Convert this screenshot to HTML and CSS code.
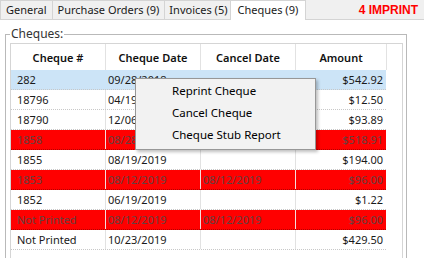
FILE: index.html
```html
<!DOCTYPE html>
<html lang="en">
<head>
    <meta charset="UTF-8">
    <title>Vendor - Cheques</title>
    <link rel="stylesheet" href="styles.css">
</head>
<body>
    <div class="window">
        <div class="tabbar">
            <div class="tab">General</div>
            <div class="tab">Purchase Orders (9)</div>
            <div class="tab tight">Invoices (5)</div>
            <div class="tab active">Cheques (9)</div>
            <div class="imprint">4 IMPRINT</div>
        </div>

        <div class="panel">
            <fieldset class="groupbox">
                <legend>Cheques:</legend>

                <div class="grid">
                    <div class="grid-head">
                        <div class="hcell">Cheque #</div>
                        <div class="hcell">Cheque Date</div>
                        <div class="hcell">Cancel Date</div>
                        <div class="hcell">Amount</div>
                        <div class="hcell blank"></div>
                    </div>

                    <div class="row selected">
                        <div class="cell num">282</div>
                        <div class="cell">09/28/2018</div>
                        <div class="cell"></div>
                        <div class="cell amt">$542.92</div>
                    </div>
                    <div class="row">
                        <div class="cell num">18796</div>
                        <div class="cell">04/19/2019</div>
                        <div class="cell"></div>
                        <div class="cell amt">$12.50</div>
                    </div>
                    <div class="row">
                        <div class="cell num">18790</div>
                        <div class="cell">12/06/2018</div>
                        <div class="cell"></div>
                        <div class="cell amt">$93.89</div>
                    </div>
                    <div class="row cancelled">
                        <div class="cell num">1858</div>
                        <div class="cell">08/28/2019</div>
                        <div class="cell">08/28/2019</div>
                        <div class="cell amt">$518.91</div>
                    </div>
                    <div class="row">
                        <div class="cell num">1855</div>
                        <div class="cell">08/19/2019</div>
                        <div class="cell"></div>
                        <div class="cell amt">$194.00</div>
                    </div>
                    <div class="row cancelled">
                        <div class="cell num">1853</div>
                        <div class="cell">08/12/2019</div>
                        <div class="cell">08/12/2019</div>
                        <div class="cell amt">$96.00</div>
                    </div>
                    <div class="row">
                        <div class="cell num">1852</div>
                        <div class="cell">06/19/2019</div>
                        <div class="cell"></div>
                        <div class="cell amt">$1.22</div>
                    </div>
                    <div class="row cancelled">
                        <div class="cell num">Not Printed</div>
                        <div class="cell">08/12/2019</div>
                        <div class="cell">08/12/2019</div>
                        <div class="cell amt">$96.00</div>
                    </div>
                    <div class="row">
                        <div class="cell num">Not Printed</div>
                        <div class="cell">10/23/2019</div>
                        <div class="cell"></div>
                        <div class="cell amt">$429.50</div>
                    </div>
                </div>
            </fieldset>

            <!-- right-click menu over the grid -->
            <ul class="context-menu">
                <li>Reprint Cheque</li>
                <li>Cancel Cheque</li>
                <li>Cheque Stub Report</li>
            </ul>
        </div>
    </div>
</body>
</html>
```

FILE: styles.css
```css
:root {
    --window-bg: #f0f0f0;
    --tab-border: #d4d4d4;
    --group-border: #b9b9b9;
    --grid-border: #d5d5d5;
    --col-line: #e2e2e2;
    --select-bg: #cce4f7;
    --cancel-bg: #ff0000;
    --text: #1a1a1a;
}

* {
    margin: 0;
    padding: 0;
    box-sizing: border-box;
}

body {
    background-color: var(--window-bg);
    color: var(--text);
    font-family: "Noto Sans", "Open Sans", sans-serif;
    font-size: 11px;
    overflow: hidden;
}

.window {
    width: 424px;
    height: 258px;
    display: flex;
    flex-direction: column;
    overflow: hidden;
}

/* tabs */
.tabbar {
    display: flex;
    align-items: flex-end;
    height: 20px;
    border-bottom: 1px solid var(--tab-border);
}

.tab {
    height: 19px;
    line-height: 17px;
    padding: 0 5px;
    border: 1px solid var(--tab-border);
    border-bottom: none;
    margin-right: -1px;
    background-color: var(--window-bg);
    white-space: nowrap;
}

.tab.tight {
    padding: 0 3px 0 4px;
}

.tab.active {
    height: 20px;
    margin-bottom: -1px;
    padding: 0 7px 0 6px;
    background-color: #ffffff;
    position: relative;
}

.imprint {
    margin-left: auto;
    align-self: center;
    padding-right: 6px;
    color: #ff0000;
    font-family: "Liberation Sans", Arial, sans-serif;
    font-weight: bold;
    font-size: 12px;
}

/* panel */
.panel {
    flex: 1;
    min-height: 0;
    background-color: #ffffff;
    position: relative;
    overflow: hidden;
}

.groupbox {
    margin: 6px 17px 0 5px;
    padding: 1px 3px 0 4px;
    border: 1px solid var(--group-border);
    border-bottom: none;
    height: 232px;
}

.groupbox legend {
    margin-left: 0;
    padding: 0 1px;
    line-height: 16px;
    font-size: 12px;
    color: #333333;
}

/* grid */
.grid {
    border: 1px solid var(--grid-border);
    border-bottom: none;
    height: 222px;
    display: flex;
    flex-direction: column;
}

.grid-head {
    display: grid;
    grid-template-columns: 95px 95px 95px 91px 1fr;
    height: 26px;
}

.hcell {
    display: flex;
    align-items: center;
    justify-content: center;
    border-right: 1px solid var(--col-line);
    font-weight: 600;
    color: #111111;
}

.hcell.blank {
    border-right: none;
}

.row {
    display: grid;
    grid-template-columns: 95px 95px 95px 90px;
    width: 375px;
    height: 20px;
    border-bottom: 1px dotted #c8c8c8;
}

.cell {
    display: flex;
    align-items: center;
    padding: 0 2px;
    border-right: 1px solid var(--col-line);
    white-space: nowrap;
    overflow: hidden;
}

.cell.num {
    padding-left: 6px;
}

.cell.amt {
    justify-content: flex-end;
    padding-right: 3px;
    border-right: none;
}

.row.selected {
    background-color: var(--select-bg);
}

.row.selected .cell {
    border-right-color: transparent;
}

.row.cancelled {
    background-color: var(--cancel-bg);
    color: #644040;
    border-bottom-color: #b00000;
}

.row.cancelled .cell {
    border-right-color: #f4dcdc;
}

/* context menu */
.context-menu {
    list-style: none;
    position: absolute;
    left: 135px;
    top: 58px;
    width: 181px;
    padding: 1px 0 3px;
    background-color: #f2f2f2;
    border: 1px solid #979797;
    box-shadow: 2px 2px 3px rgba(0, 0, 0, 0.25);
    color: #000000;
}

.context-menu li {
    height: 22px;
    line-height: 22px;
    padding-left: 36px;
    font-size: 11.5px;
}
```
